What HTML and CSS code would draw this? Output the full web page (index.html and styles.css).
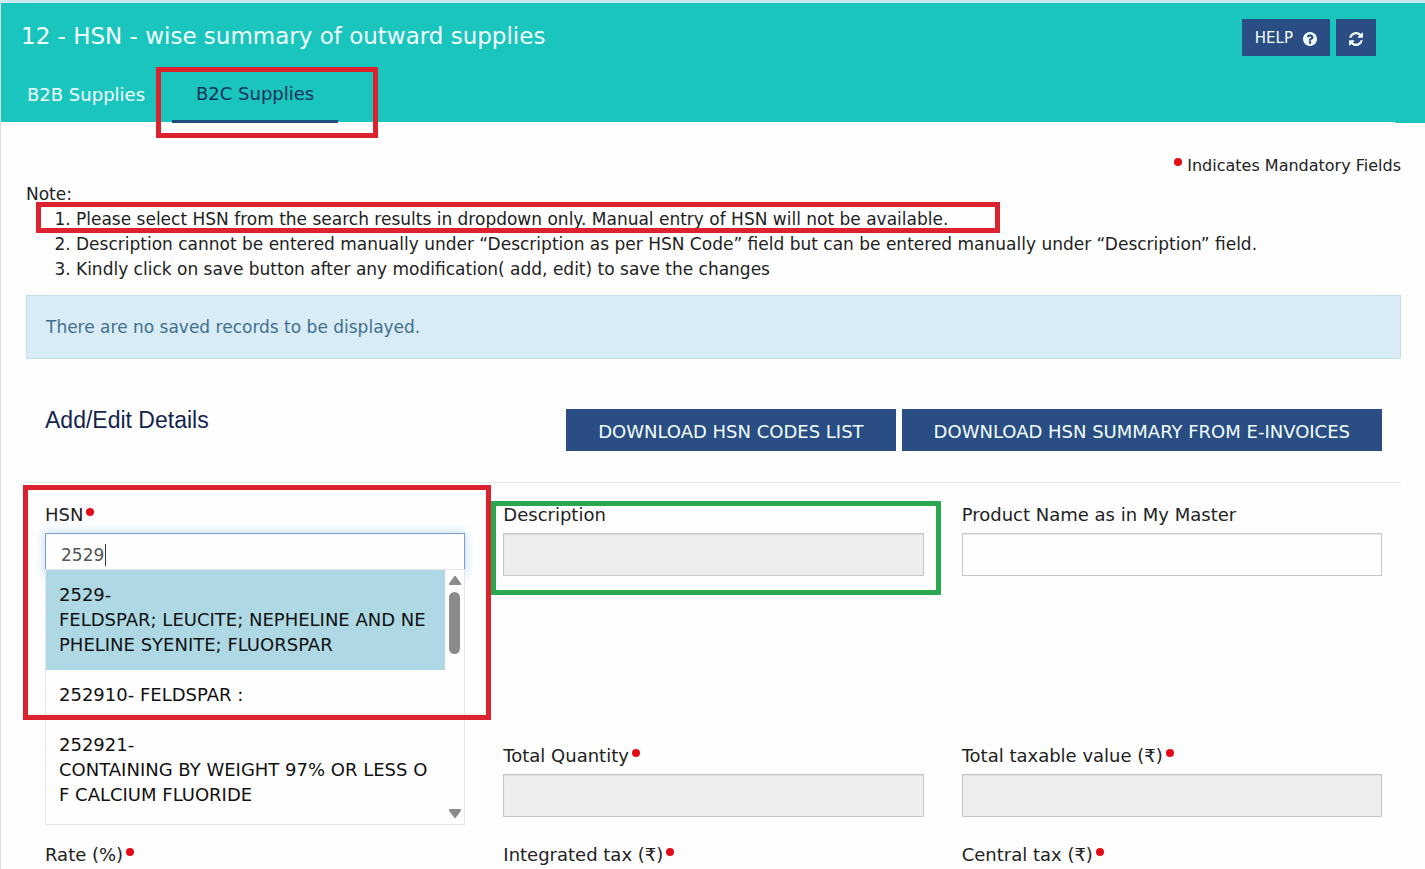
FILE: index.html
```html
<!DOCTYPE html>
<html lang="en">
<head>
<meta charset="utf-8">
<title>12 - HSN - wise summary of outward supplies</title>
<link rel="stylesheet" href="styles.css">
</head>
<body>
<div class="page">
  <header class="header">
    <div class="title-row">
      <h1 class="title">12 - HSN - wise summary of outward supplies</h1>
      <div class="tools">
        <button class="btn btn-small" type="button">HELP
          <svg class="icon" viewBox="0 0 1536 1536" aria-hidden="true"><path fill="currentColor" d="M896 1248v-192q0-14-9-23t-23-9H672q-14 0-23 9t-9 23v192q0 14 9 23t23 9h192q14 0 23-9t9-23zm256-672q0-88-55.500-163t-138.500-116-170-41q-243 0-371 213-15 24 8 42l132 100q7 6 19 6 16 0 25-12 53-68 86-92 34-24 86-24 48 0 85.500 26t37.500 59q0 38-20 61t-68 45q-63 28-115.500 86.500T640 892v36q0 14 9 23t23 9h192q14 0 23-9t9-23q0-19 21.500-49.500T972 829q32-18 49-28.500t46-35 44.500-48 28-60.500 12.500-81zm384 192q0 209-103 385.500T1153.500 1433 768 1536t-385.500-103T103 1153.500 0 768t103-385.500T382.500 103 768 0t385.500 103T1433 382.500 1536 768z"/></svg>
        </button>
        <button class="btn btn-small" type="button" aria-label="Refresh">
          <svg class="icon" viewBox="0 0 1536 1536" aria-hidden="true"><path fill="currentColor" d="M1511 928q0 5-1 7-64 268-268 434.500T764 1536q-146 0-282.500-55T238 1324l-129 129q-19 19-45 19t-45-19-19-45V960q0-26 19-45t45-19h448q26 0 45 19t19 45-19 45l-137 137q71 66 161 102t187 36q134 0 250-65t186-179q11-17 53-117 8-23 30-23h192q13 0 22.500 9.500t9.500 22.500zm25-800v448q0 26-19 45t-45 19h-448q-26 0-45-19t-19-45 19-45l138-138Q969 256 768 256q-134 0-250 65T332 500q-11 17-53 117-8 23-30 23H50q-13 0-22.500-9.500T18 608v-7q65-268 270-434.500T768 0q146 0 284 55.500T1297 212l130-129q19-19 45-19t45 19 19 45z"/></svg>
        </button>
      </div>
    </div>
    <nav class="tabs">
      <a class="tab" href="#b2b">B2B Supplies</a>
      <a class="tab tab-active marked mark-tab" href="#b2c">B2C Supplies</a>
    </nav>
  </header>

  <main class="content">
    <p class="legend"><span class="dot"></span> Indicates Mandatory Fields</p>
    <p class="note">Note:</p>
    <ol class="notes">
      <li class="marked mark-note">Please select HSN from the search results in dropdown only. Manual entry of HSN will not be available.</li>
      <li>Description cannot be entered manually under “Description as per HSN Code” field but can be entered manually under “Description” field.</li>
      <li>Kindly click on save button after any modification( add, edit) to save the changes</li>
    </ol>
    <div class="alert">There are no saved records to be displayed.</div>

    <div class="section-head">
      <h2 class="section-title">Add/Edit Details</h2>
      <div class="actions">
        <button class="btn" type="button">DOWNLOAD HSN CODES LIST</button>
        <button class="btn" type="button">DOWNLOAD HSN SUMMARY FROM E-INVOICES</button>
      </div>
    </div>

    <form class="fields">
      <div class="field field-tall marked mark-hsn">
        <label class="label" for="hsn">HSN<span class="dot"></span></label>
        <div class="combo">
          <input class="input input-focus" id="hsn" type="text" value="2529">
          <span class="caret"></span>
          <div class="menu">
            <ul class="options">
              <li class="option option-active">2529-<br>FELDSPAR; LEUCITE; NEPHELINE AND NE<br>PHELINE SYENITE; FLUORSPAR</li>
              <li class="option">252910- FELDSPAR :</li>
              <li class="option">252921-<br>CONTAINING BY WEIGHT 97% OR LESS O<br>F CALCIUM FLUORIDE</li>
            </ul>
            <div class="scrollbar">
              <svg class="arrow" viewBox="0 0 14 10" aria-hidden="true"><path fill="#8b8b8b" d="M6 1.500Q7 0 8 1.500L13 8.500Q13.500 10 12 10H2Q.5 10 1 8.500Z"/></svg>
              <span class="thumb"></span>
              <svg class="arrow arrow-down" viewBox="0 0 14 10" aria-hidden="true"><path fill="#8b8b8b" d="M6 8.500Q7 10 8 8.500L13 1.500Q13.500 0 12 0H2Q.5 0 1 1.500Z"/></svg>
            </div>
          </div>
        </div>
      </div>
      <div class="field field-tall marked mark-desc">
        <label class="label" for="desc">Description</label>
        <input class="input" id="desc" type="text" disabled>
      </div>
      <div class="field field-tall">
        <label class="label" for="product">Product Name as in My Master</label>
        <input class="input" id="product" type="text">
      </div>
      <div class="field field-second">
        <label class="label" for="qty">Total Quantity<span class="dot"></span></label>
        <input class="input" id="qty" type="text" disabled>
      </div>
      <div class="field">
        <label class="label" for="taxable">Total taxable value (₹)<span class="dot"></span></label>
        <input class="input" id="taxable" type="text" disabled>
      </div>
      <div class="field">
        <label class="label" for="rate">Rate (%)<span class="dot"></span></label>
        <input class="input" id="rate" type="text" disabled>
      </div>
      <div class="field">
        <label class="label" for="igst">Integrated tax (₹)<span class="dot"></span></label>
        <input class="input" id="igst" type="text" disabled>
      </div>
      <div class="field">
        <label class="label" for="cgst">Central tax (₹)<span class="dot"></span></label>
        <input class="input" id="cgst" type="text" disabled>
      </div>
    </form>
  </main>
</div>
</body>
</html>
```

FILE: styles.css
```css
*,
*::after {
  box-sizing: border-box;
}

body {
  margin: 0;
  font-family: "DejaVu Sans", Verdana, sans-serif;
  font-size: 17px;
  line-height: 25px;
  color: #222;
  background: #fefefe;
}

.page {
  height: 100vh;
  overflow: hidden;
  border-top: 3px solid #cdeaf0;
  border-left: 1px solid #ddd;
}

/* Header */
.header {
  background: #1ac5bd;
  color: #f2ffff;
}

.title-row {
  display: flex;
  justify-content: space-between;
  padding: 16px 49px 0 20px;
}

.title {
  margin: 0;
  font-size: 23px;
  font-weight: 400;
  line-height: 34px;
}

.tools {
  display: flex;
  gap: 6px;
}

.btn {
  display: flex;
  align-items: center;
  gap: 10px;
  height: 42px;
  padding: 2px 32px 0;
  border: 0;
  background: #2a4d84;
  color: #f2ffff;
  font: inherit;
  font-size: 18px;
  white-space: nowrap;
}

.btn-small {
  height: 37px;
  padding: 2px 13px 0;
  font-size: 15px;
}

.icon {
  width: 14px;
  height: 14px;
}

.tabs {
  display: flex;
  margin: 14px 30px 0 0;
  padding-left: 26px;
  gap: 27px;
  border-bottom: 1px solid #fff;
  font-size: 18px;
}

.tab {
  padding: 12px 0 13px;
  margin-bottom: -1px;
  border-bottom: 3px solid transparent;
  color: inherit;
  text-decoration: none;
}

.tab-active {
  padding: 11px 24px 14px;
  border-bottom-color: #1f4f78;
  color: #14305c;
}

/* Highlight frames drawn over the page */
.marked {
  position: relative;
}

.marked::after {
  content: "";
  position: absolute;
  z-index: 3;
  border: 5px solid #dc222e;
  pointer-events: none;
}

.mark-tab::after {
  inset: -3px -40px -18px -16px;
}

.mark-note::after {
  top: -5px;
  bottom: -1px;
  left: -40px;
  width: 964px;
}

.mark-hsn::after {
  inset: -17px -7px 23px -3px;
}

.mark-desc::after {
  inset: -1px 2px 148px 7px;
  border-color: #2ba84e;
}

/* Content */
.content {
  padding: 30px 24px 0 25px;
}

.legend {
  margin: 0;
  font-size: 16px;
  text-align: right;
}

.dot {
  display: inline-block;
  width: 8px;
  height: 8px;
  margin-left: 3px;
  border-radius: 50%;
  background: #e30b17;
  vertical-align: 5px;
}

.note {
  margin: 4px 0 0;
}

.notes {
  margin: 0;
  padding-left: 50px;
}

.alert {
  margin-top: 13px;
  padding: 19px 19px 18px;
  border: 1px solid #bfe0ea;
  background: #d9ebf5;
  color: #3f718f;
}

.section-head {
  display: flex;
  justify-content: space-between;
  margin-top: 30px;
  padding: 20px 19px 31px;
  border-bottom: 1px solid #e6e6e6;
}

.section-title {
  margin: 0;
  font-family: "Liberation Sans", Arial, sans-serif;
  font-size: 23px;
  font-weight: 400;
  line-height: 23px;
  color: #14244f;
}

.actions {
  display: flex;
  gap: 6px;
}

.fields {
  display: grid;
  grid-template-columns: repeat(3, 1fr);
  padding-top: 19px;
}

.field {
  padding: 0 19px 25px;
}

.field-tall {
  padding-bottom: 167px;
}

.field-second {
  grid-column: 2;
}

.label {
  display: block;
  padding-bottom: 6px;
  font-size: 18px;
}

.input {
  display: block;
  width: 100%;
  height: 43px;
  padding: 0 15px;
  border: 1px solid #c4c6c8;
  background: #fefefe;
  color: #555;
  font: inherit;
  box-shadow: inset 0 1px 1px rgba(0, 0, 0, 0.08);
  outline: 0;
}

.input:disabled {
  background: #eee;
}

.input-focus {
  border-color: #7d9cc4;
  box-shadow: 0 0 10px #b9d8f5;
}

.combo {
  position: relative;
}

.caret {
  position: absolute;
  top: 11px;
  left: 60px;
  width: 1px;
  height: 22px;
  background: #333;
}

.menu {
  position: absolute;
  z-index: 2;
  top: 36px;
  left: 0;
  right: 0;
  display: flex;
  height: 256px;
  border: 1px solid #e6e6e6;
  background: #fefefe;
  color: #111;
  font-size: 18px;
}

.options {
  flex: 1;
  margin: 0;
  padding: 0;
  list-style: none;
}

.option {
  padding: 12px 0 13px 13px;
  white-space: nowrap;
}

.option-active {
  background: #add8e4;
}

.scrollbar {
  display: flex;
  flex-direction: column;
  align-items: center;
  width: 19px;
  padding: 5px 0;
}

.arrow {
  width: 14px;
  height: 10px;
}

.thumb {
  width: 11px;
  height: 62px;
  margin-top: 7px;
  border-radius: 6px;
  background: #8b8b8b;
}

.arrow-down {
  margin-top: auto;
}
```
